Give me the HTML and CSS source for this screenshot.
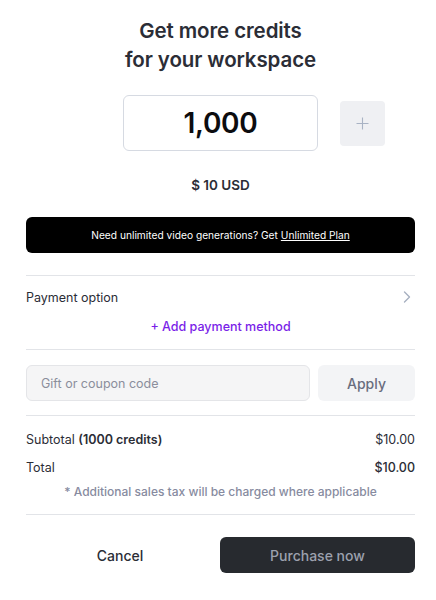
FILE: index.html
```html
<!DOCTYPE html>
<html lang="en">
<head>
<meta charset="utf-8">
<title>Get more credits</title>
<link rel="stylesheet" href="styles.css">
</head>
<body>
<div class="sheet">
  <h1 class="title">Get more credits<br>for your workspace</h1>

  <div class="amount-row">
    <div class="amount-box">1,000</div>
    <button class="plus-btn" aria-label="Increase">
      <svg width="13" height="13" viewBox="0 0 13 13"><path d="M6.5 0.5v12M0.5 6.5h12" stroke="#a9b3c4" stroke-width="1.1" fill="none"/></svg>
    </button>
  </div>

  <div class="price">$ 10 USD</div>

  <div class="banner">Need unlimited video generations? Get <a class="banner-link">Unlimited Plan</a></div>

  <div class="section payment">
    <div class="payment-row">
      <span>Payment option</span>
      <svg width="8" height="12" viewBox="0 0 8 12"><path d="M1.5 1l5 5-5 5" stroke="#a7b0c0" stroke-width="1.4" fill="none" stroke-linecap="round" stroke-linejoin="round"/></svg>
    </div>
    <div class="add-method">+ Add payment method</div>
  </div>

  <div class="section coupon">
    <div class="coupon-input">Gift or coupon code</div>
    <button class="apply-btn">Apply</button>
  </div>

  <div class="section totals">
    <div class="line"><span>Subtotal <b>(1000 credits)</b></span><span>$10.00</span></div>
    <div class="line total"><span>Total</span><span class="strong">$10.00</span></div>
    <div class="note">* Additional sales tax will be charged where applicable</div>
  </div>

  <div class="section actions">
    <button class="cancel-btn">Cancel</button>
    <button class="buy-btn">Purchase now</button>
  </div>
</div>
</body>
</html>
```

FILE: styles.css
```css
* { box-sizing: border-box; }
html, body { margin: 0; padding: 0; background: #ffffff; }
body {
  font-family: Inter, "Noto Sans", "Liberation Sans", sans-serif;
  color: #2a2c35;
}
button { font-family: inherit; border: none; cursor: pointer; }

.sheet {
  padding: 16px 21px 0 26px;
  width: 436px;
}

.title {
  margin: 0;
  text-align: center;
  font-size: 20.5px;
  line-height: 29px;
  font-weight: 600;
  color: #2b2d36;
  letter-spacing: -0.1px;
}

.amount-row {
  display: grid;
  grid-template-columns: 1fr 195px 1fr;
  align-items: center;
  margin-top: 21px;
}
.amount-box {
  grid-column: 2;
  height: 56px;
  border: 1px solid #d6dae2;
  border-radius: 6px;
  display: flex;
  align-items: center;
  justify-content: center;
  font-size: 28px;
  font-weight: 600;
  color: #0c0c0f;
  letter-spacing: -0.3px;
}
.plus-btn {
  grid-column: 3;
  justify-self: start;
  margin-left: 22px;
  width: 45px;
  height: 45px;
  background: #eff0f3;
  border-radius: 4px;
  display: flex;
  align-items: center;
  justify-content: center;
  padding: 0;
}

.price {
  margin-top: 25px;
  text-align: center;
  font-size: 13.5px;
  font-weight: 600;
  color: #2b2d36;
  line-height: 18px;
}

.banner {
  margin-top: 23px;
  height: 36px;
  background: #000000;
  border-radius: 6px;
  color: #ffffff;
  font-size: 10.2px;
  display: flex;
  align-items: center;
  justify-content: center;
}
.banner-link { color: #ffffff; text-decoration: underline; margin-left: 3px; }

.section { border-top: 1px solid #e2e4e8; }

.payment { margin-top: 22px; padding: 13px 0 15px; }
.payment-row {
  display: flex;
  justify-content: space-between;
  align-items: center;
  font-size: 12.5px;
  color: #2b2d36;
  height: 16px;
  padding-right: 4px;
}
.add-method {
  margin-top: 14px;
  text-align: center;
  font-size: 12.5px;
  font-weight: 500;
  color: #7a1ee8;
}

.coupon {
  display: flex;
  gap: 8px;
  padding: 15px 0 14px;
}
.coupon-input {
  flex: 1;
  height: 36px;
  background: #f5f5f6;
  border: 1px solid #e4e5e8;
  border-radius: 6px;
  display: flex;
  align-items: center;
  padding-left: 14px;
  font-size: 12.5px;
  color: #8b8e9c;
}
.apply-btn {
  width: 97px;
  height: 36px;
  background: #f3f4f6;
  border-radius: 6px;
  font-size: 14px;
  font-weight: 500;
  color: #696d7e;
}

.totals { padding: 15px 0 14px; }
.line {
  display: flex;
  justify-content: space-between;
  font-size: 12.5px;
  color: #2b2d36;
  line-height: 18px;
}
.line b { font-weight: 600; }
.line.total { margin-top: 10px; }
.line .strong { font-weight: 500; }
.note {
  margin-top: 7px;
  text-align: center;
  font-size: 12px;
  font-weight: 500;
  color: #878ba0;
  line-height: 16px;
}

.actions {
  display: grid;
  grid-template-columns: 1fr 195px;
  gap: 6px;
  padding-top: 22px;
}
.cancel-btn {
  background: transparent;
  font-size: 14px;
  font-weight: 500;
  color: #2b2d36;
  height: 36px;
  padding-right: 6px;
}
.buy-btn {
  height: 36px;
  background: #272a2f;
  border-radius: 6px;
  font-size: 14px;
  font-weight: 500;
  color: #9ca1ae;
}
```
